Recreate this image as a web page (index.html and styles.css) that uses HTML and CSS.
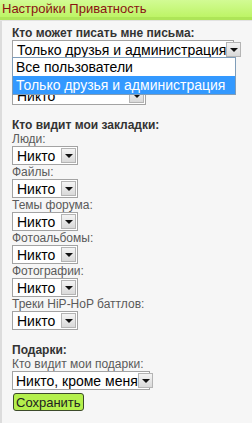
FILE: index.html
```html
<!DOCTYPE html>
<html lang="ru">
<head>
    <meta charset="utf-8" />
    <title>Настройки Приватность</title>
    <link rel="stylesheet" href="styles.css">
</head>
<body>
    <div id="privacy">
        <div class="title">Настройки Приватность</div>

        <div class="content">
            <div class="section">
                <div class="head">Кто может писать мне письма:</div>
                <div class="selectWrap">
                    <div class="select wide">
                        <span class="value">Только друзья и администрация</span>
                        <span class="arrow"></span>
                    </div>
                    <!-- open dropdown -->
                    <ul class="dropList">
                        <li>Все пользователи</li>
                        <li class="active">Только друзья и администрация</li>
                    </ul>
                </div>
            </div>

            <div class="section">
                <!-- label hidden under the open list -->
                <div class="label blank"></div>
                <div class="select mid">
                    <span class="value">Никто</span>
                    <span class="arrow"></span>
                </div>
            </div>

            <div class="section">
                <div class="head">Кто видит мои закладки:</div>
                <div class="label">Люди:</div>
                <div class="select"><span class="value">Никто</span><span class="arrow"></span></div>
                <div class="label">Файлы:</div>
                <div class="select"><span class="value">Никто</span><span class="arrow"></span></div>
                <div class="label">Темы форума:</div>
                <div class="select"><span class="value">Никто</span><span class="arrow"></span></div>
                <div class="label">Фотоальбомы:</div>
                <div class="select"><span class="value">Никто</span><span class="arrow"></span></div>
                <div class="label">Фотографии:</div>
                <div class="select"><span class="value">Никто</span><span class="arrow"></span></div>
                <div class="label">Треки HiP-HoP баттлов:</div>
                <div class="select"><span class="value">Никто</span><span class="arrow"></span></div>
            </div>

            <div class="section">
                <div class="head">Подарки:</div>
                <div class="label">Кто видит мои подарки:</div>
                <div class="select gifts"><span class="value">Никто, кроме меня</span><span class="arrow"></span></div>
                <button type="button" class="saveButton">Сохранить</button>
            </div>
        </div>
    </div>
</body>
</html>
```

FILE: styles.css
```css
body {
    margin: 0px;
    padding: 0px;
    background-color: #f6f6f6;
    font-family: "Liberation Sans", Arial, sans-serif;
    font-size: 12px;
    color: #333;
}

#privacy {
    min-height: 423px;
    border-left: 2px solid #dcdcdc;
    box-sizing: border-box;
}

.title {
    height: 17px;
    line-height: 18px;
    padding-left: 2px;
    margin-left: -2px;
    background: linear-gradient(#d2fb94, #bdf466);
    border-bottom: 3px solid #aee558;
    box-shadow: 0px 1px 0px #e2e2e2;
    color: #8a1212;
    font-size: 13px;
}

.content {
    padding: 6px 10px 10px 10px;
}

.section {
    margin-bottom: 13px;
}

.head {
    font-weight: bold;
    font-size: 12px;
    line-height: 14px;
    color: #333;
}

.label {
    line-height: 14px;
    font-size: 12px;
    color: #5a5a5a;
}

.blank {
    height: 14px;
}

.selectWrap {
    position: relative;
}

.select {
    display: flex;
    align-items: center;
    justify-content: space-between;
    width: 66px;
    height: 19px;
    box-sizing: border-box;
    background-color: #fff;
    border: 1px solid #a3a3a3;
    padding: 0px 1px 0px 4px;
    font-size: 14px;
    color: #000;
    white-space: nowrap;
}

.select.wide {
    width: 222px;
}

.select.mid {
    width: 134px;
}

.select.gifts {
    width: 138px;
    padding-left: 3px;
}

.arrow {
    position: relative;
    flex: none;
    width: 15px;
    height: 15px;
    box-sizing: border-box;
    border: 1px solid #b4b4b4;
    background: linear-gradient(#f4f4f4, #d9d9d9);
}

    .arrow::after {
        content: "";
        position: absolute;
        left: 3px;
        top: 5px;
        border-left: 4px solid transparent;
        border-right: 4px solid transparent;
        border-top: 4px solid #111;
    }

.dropList {
    position: absolute;
    left: 0px;
    top: 17px;
    width: 222px;
    margin: 0px;
    padding: 0px;
    list-style: none;
    background-color: #fff;
    border: 1px solid #7f9db9;
    font-size: 14px;
    color: #000;
    z-index: 5;
}

    .dropList li {
        height: 18px;
        line-height: 18px;
        padding-left: 3px;
        white-space: nowrap;
    }

    .dropList .active {
        background-color: #3399ff;
        color: #fff;
    }

.saveButton {
    display: block;
    margin: 3px 0px 0px 1px;
    height: 18px;
    padding: 0px 2px;
    background-color: #b4f04c;
    border: 1px solid #3c4a2a;
    border-radius: 3px;
    font-family: "Liberation Sans", Arial, sans-serif;
    font-size: 13px;
    color: #222;
}
```
